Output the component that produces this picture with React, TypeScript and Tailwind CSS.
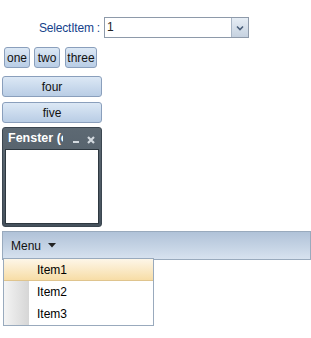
import React from 'react';

const btn =
  'h-[21px] rounded-[3px] border border-[#8a9fbc] bg-gradient-to-b from-[#dce8f5] to-[#b9cde5] text-[12px] text-[#111] leading-none flex items-center justify-center';

const App: React.FC = () => {
  return (
    <div
      className="relative w-[311px] h-[338px] overflow-hidden bg-white text-[12px]"
      style={{ fontFamily: '"Liberation Sans", Arial, sans-serif' }}
    >
      {/* select row */}
      <div className="flex items-center pt-[17px]">
        <label className="w-[104px] pr-[4px] text-right tracking-[-0.2px] text-[#15428b]">SelectItem :</label>
        <div className="flex h-[21px] w-[145px] border border-[#8e9aaa] bg-white">
          <div className="flex-1 pl-[2px] leading-[19px] text-[#222]">1</div>
          <div className="flex w-[17px] items-center justify-center border-l border-[#a9b6c6] bg-gradient-to-b from-[#e6edf5] to-[#c6d2e0]">
            <svg width="8" height="6" viewBox="0 0 8 6">
              <path d="M1 1.5 L4 4.5 L7 1.5" stroke="#4a5f7a" strokeWidth="1.6" fill="none" />
            </svg>
          </div>
        </div>
      </div>

      {/* small buttons */}
      <div className="mt-[9px] flex pl-[4px]">
        <button className={`${btn} w-[26px]`}>one</button>
        <button className={`${btn} ml-[4px] w-[26px]`}>two</button>
        <button className={`${btn} ml-[5px] w-[32px]`}>three</button>
      </div>

      <button className={`${btn} ml-[2px] mt-[8px] w-[100px]`}>four</button>
      <button className={`${btn} ml-[2px] mt-[5px] w-[100px]`}>five</button>

      {/* window */}
      <div className="ml-[2px] mt-[4px] flex h-[100px] w-[100px] flex-col rounded-[3px] border border-[#3b4650] bg-gradient-to-b from-[#5d6973] to-[#46525d] px-[2px] pb-[2px]">
        <div className="flex h-[21px] items-center overflow-hidden">
          <span className="w-[58px] overflow-hidden whitespace-nowrap pl-[3px] text-[12.5px] font-bold text-white">
            Fenster (offen)
          </span>
          <svg width="6" height="10" viewBox="0 0 6 10" className="ml-[10px]">
            <rect x="0" y="7" width="6" height="2" fill="#d3d9df" />
          </svg>
          <svg width="8" height="8" viewBox="0 0 8 8" className="ml-[8px] mt-[2px]">
            <path d="M1 1 L7 7 M7 1 L1 7" stroke="#d3d9df" strokeWidth="2.2" />
          </svg>
        </div>
        <div className="flex-1 border border-[#2e3840] bg-white" />
      </div>

      {/* menu bar */}
      <div className="ml-[2px] mt-[4px] flex h-[29px] items-center border border-[#99aabd] bg-gradient-to-b from-[#b0c2d8] to-[#d7e2ef] pl-[8px] text-[#111]">
        <span>Menu</span>
        <svg width="8" height="5" viewBox="0 0 8 5" className="ml-[7px]">
          <path d="M0 0 L8 0 L4 4.5 Z" fill="#222" />
        </svg>
      </div>

      {/* dropdown */}
      <div className="absolute left-[3px] top-[258px] flex h-[68px] w-[151px] border border-[#99aabd] bg-white">
        <div className="flex w-full flex-col">
          <div className="flex h-[22px] items-center border-b border-[#dfc48e] bg-gradient-to-b from-[#fdf6e8] to-[#f7dda6] pl-[33px]">
            Item1
          </div>
          <div className="flex flex-1">
            <div className="w-[25px] bg-gradient-to-r from-[#f4f4f4] to-[#d6d6d6]" />
            <div className="flex flex-1 flex-col pl-[8px]">
              <div className="flex h-[22px] items-center">Item2</div>
              <div className="flex h-[21px] items-center">Item3</div>
            </div>
          </div>
        </div>
      </div>
    </div>
  );
};

export default App;
